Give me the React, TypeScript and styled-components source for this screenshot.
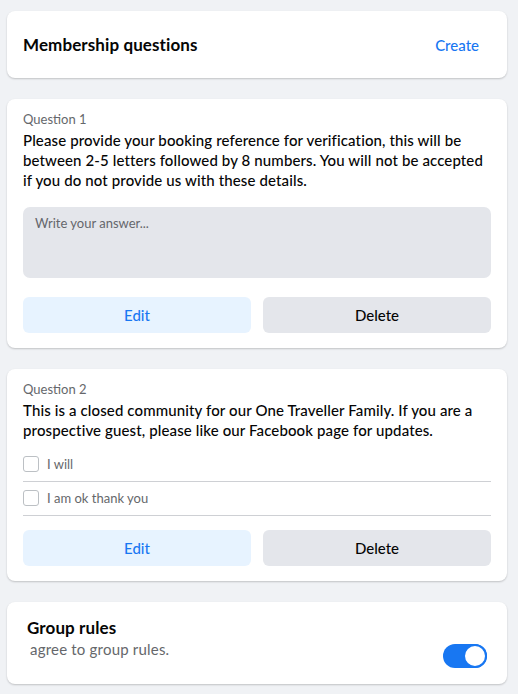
import React from "react";
import styled, { createGlobalStyle } from "styled-components";

const Global = createGlobalStyle`
  html, body { margin: 0; padding: 0; background: #f0f2f5; }
  body { font-family: "Lato", "Noto Sans", sans-serif; color: #050505; }
  * { box-sizing: border-box; }
`;

const Page = styled.div`
  width: 518px;
  padding: 11px 11px 10px 7px;
  display: flex;
  flex-direction: column;
  gap: 21px;
`;

const Card = styled.div<{ $pad?: string }>`
  background: #fff;
  border-radius: 8px;
  box-shadow: 0 1px 2px rgba(0, 0, 0, 0.2);
  padding: ${(p) => p.$pad || "12px 16px 15px"};
  display: flex;
  flex-direction: column;
`;

const HeaderRow = styled.div`
  height: 67px;
  padding: 0 28px 0 16px;
  display: flex;
  align-items: center;
  justify-content: space-between;
`;

const Title = styled.div`
  font-size: 17px;
  font-weight: 700;
  line-height: 20px;
  letter-spacing: 0.1px;
`;

const LinkButton = styled.span`
  color: #1877f2;
  font-size: 15px;
  font-weight: 500;
`;

const QLabel = styled.div`
  font-size: 13px;
  line-height: 16px;
  color: #65676b;
`;

const QText = styled.div`
  font-size: 15px;
  line-height: 20px;
  font-weight: 500;
  letter-spacing: 0.12px;
  margin-top: 3px;
`;

const Answer = styled.div`
  margin-top: 17px;
  height: 71px;
  background: #e4e6eb;
  border-radius: 7px;
  padding: 7px 12px;
  font-size: 13px;
  color: #65676b;
  line-height: 18px;
`;

const Buttons = styled.div<{ $mt: number }>`
  margin-top: ${(p) => p.$mt}px;
  display: grid;
  grid-template-columns: 1fr 1fr;
  gap: 12px;
`;

const Btn = styled.div<{ $primary?: boolean }>`
  height: 36px;
  border-radius: 6px;
  display: flex;
  align-items: center;
  justify-content: center;
  font-size: 15px;
  font-weight: 500;
  background: ${(p) => (p.$primary ? "#e7f3ff" : "#e4e6eb")};
  color: ${(p) => (p.$primary ? "#1877f2" : "#050505")};
`;

const Options = styled.div`
  margin-top: 8px;
  display: flex;
  flex-direction: column;
`;

const Option = styled.div`
  height: 34px;
  display: flex;
  align-items: center;
  gap: 8px;
  border-bottom: 1px solid #ced0d4;
  font-size: 13px;
  color: #65676b;
  padding-bottom: 1px;
`;

const Box = styled.span`
  width: 16px;
  height: 16px;
  border: 1px solid #bcc0c4;
  border-radius: 3px;
  flex: none;
`;

const RulesCard = styled.div`
  background: #fff;
  border-radius: 8px;
  box-shadow: 0 1px 2px rgba(0, 0, 0, 0.2);
  padding: 16px 20px;
  display: flex;
  align-items: flex-end;
  justify-content: space-between;
  height: 82px;
`;

const RulesText = styled.div`
  display: flex;
  flex-direction: column;
  gap: 1px;
  padding-bottom: 9px;
`;

const Sub = styled.div`
  font-size: 15px;
  line-height: 20px;
  color: #65676b;
  padding-left: 3px;
  letter-spacing: 0.2px;
`;

const Toggle = styled.div`
  width: 44px;
  height: 24px;
  border-radius: 12px;
  background: #1877f2;
  display: flex;
  justify-content: flex-end;
`;

const Knob = styled.div`
  width: 24px;
  height: 24px;
  border-radius: 50%;
  background: #fff;
  border: 2px solid #1877f2;
`;

export default function App() {
  return (
    <>
      <Global />
      <Page>
        <Card $pad="0">
          <HeaderRow>
            <Title>Membership questions</Title>
            <LinkButton>Create</LinkButton>
          </HeaderRow>
        </Card>
        <Card>
          <QLabel>Question 1</QLabel>
          <QText>
            Please provide your booking reference for verification, this will be between 2-5 letters followed by 8
            numbers. You will not be accepted if you do not provide us with these details.
          </QText>
          <Answer>Write your answer...</Answer>
          <Buttons $mt={19}>
            <Btn $primary>Edit</Btn>
            <Btn>Delete</Btn>
          </Buttons>
        </Card>
        <Card>
          <QLabel>Question 2</QLabel>
          <QText>
            This is a closed community for our One Traveller Family. If you are a prospective guest, please like our
            Facebook page for updates.
          </QText>
          <Options>
            <Option>
              <Box />I will
            </Option>
            <Option>
              <Box />I am ok thank you
            </Option>
          </Options>
          <Buttons $mt={14}>
            <Btn $primary>Edit</Btn>
            <Btn>Delete</Btn>
          </Buttons>
        </Card>
        <RulesCard>
          <RulesText>
            <Title>Group rules</Title>
            <Sub>agree to group rules.</Sub>
          </RulesText>
          <Toggle>
            <Knob />
          </Toggle>
        </RulesCard>
      </Page>
    </>
  );
}
